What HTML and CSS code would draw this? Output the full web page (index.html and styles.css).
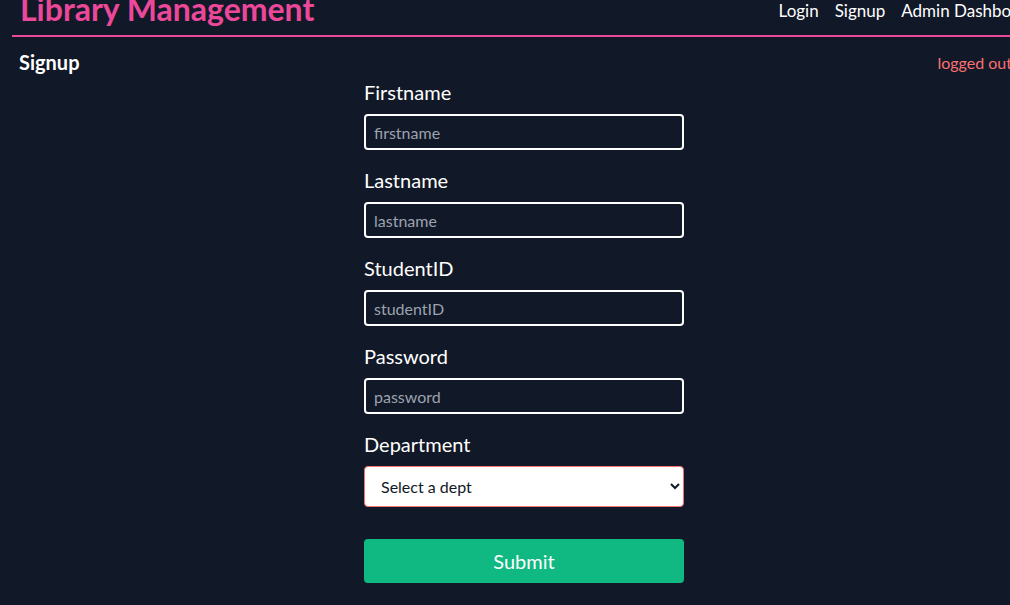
FILE: index.html
```html
<!DOCTYPE html>
<html lang="en">
<head>
<meta charset="utf-8">
<title>Library Management</title>
<link rel="stylesheet" href="styles.css">
</head>
<body>
<div class="page">
  <header class="topbar">
    <h1 class="brand">Library Management</h1>
    <nav class="nav">
      <a href="#">Login</a>
      <a href="#">Signup</a>
      <a href="#">Admin Dashboard</a>
    </nav>
  </header>
  <div class="subbar">
    <h2 class="page-title">Signup</h2>
    <span class="status">logged out</span>
  </div>
  <form class="form">
    <label class="field">
      <span class="label">Firstname</span>
      <input class="input" type="text" placeholder="firstname">
    </label>
    <label class="field">
      <span class="label">Lastname</span>
      <input class="input" type="text" placeholder="lastname">
    </label>
    <label class="field">
      <span class="label">StudentID</span>
      <input class="input" type="text" placeholder="studentID">
    </label>
    <label class="field">
      <span class="label">Password</span>
      <input class="input" type="password" placeholder="password">
    </label>
    <label class="field">
      <span class="label">Department</span>
      <select class="select">
        <option>Select a dept</option>
      </select>
    </label>
    <button class="submit" type="button">Submit</button>
  </form>
</div>
</body>
</html>
```

FILE: styles.css
```css
html, body {
  margin: 0;
  padding: 0;
  background: #111827;
  overflow: hidden;
}
body {
  font-family: Lato, "Open Sans", sans-serif;
  color: #ffffff;
}
.page {
  width: 1040px;
}
.topbar {
  display: flex;
  align-items: flex-end;
  margin-left: 12px;
  padding: 0 8px;
  height: 35px;
  border-bottom: 2px solid #ec4899;
}
.brand {
  margin: 0;
  font-size: 32px;
  font-weight: 700;
  color: #ec4899;
  line-height: 1;
  position: relative;
  top: -10px;
}
.nav {
  margin-left: auto;
  margin-right: -3px;
  display: flex;
  gap: 16px;
  position: relative;
  top: -14px;
}
.nav a {
  color: #ffffff;
  text-decoration: none;
  font-size: 17px;
}
.subbar {
  display: flex;
  align-items: center;
  justify-content: space-between;
  padding: 12px 8px 0 19px;
  height: 26px;
}
.page-title {
  margin: 0;
  font-size: 20px;
  font-weight: 700;
}
.status {
  color: #f87171;
  font-size: 16px;
  margin-right: 20px;
}
.form {
  width: 320px;
  margin: 0 0 0 364px;
  padding-top: 3px;
  display: flex;
  flex-direction: column;
}
.field {
  display: flex;
  flex-direction: column;
  gap: 8px;
  margin-bottom: 16px;
}
.label {
  font-size: 20px;
  line-height: 28px;
}
.input {
  box-sizing: border-box;
  height: 36px;
  border: 2px solid #ffffff;
  border-radius: 4px;
  background: #111827;
  color: #ffffff;
  font-family: inherit;
  font-size: 16px;
  padding: 0 8px;
}
.input::placeholder {
  color: #9ca3af;
}
.select {
  box-sizing: border-box;
  height: 41px;
  border: 1px solid #f87171;
  border-radius: 4px;
  background: #ffffff;
  color: #111827;
  font-family: inherit;
  font-size: 16px;
  padding: 0 12px;
  margin-bottom: 16px;
}
.submit {
  height: 44px;
  border: none;
  border-radius: 4px;
  background: #10b981;
  color: #ffffff;
  font-family: inherit;
  font-size: 20px;
}
```
